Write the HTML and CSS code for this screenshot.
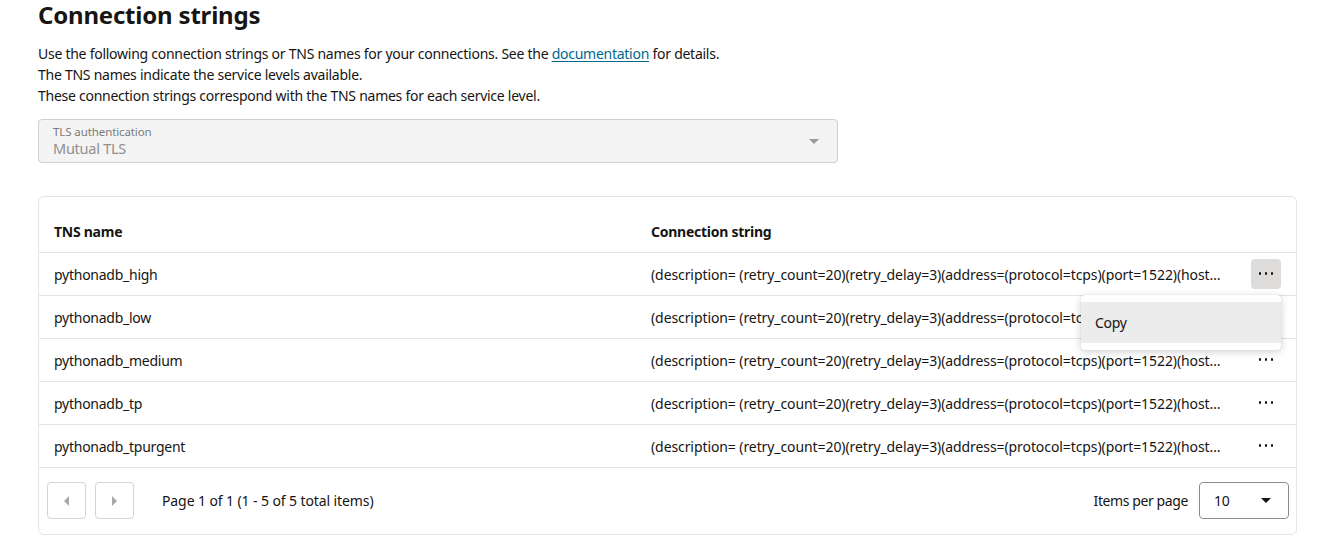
FILE: index.html
```html
<!DOCTYPE html>
<html lang="en">
<head>
<meta charset="utf-8">
<title>Connection strings</title>
<link rel="stylesheet" href="styles.css">
</head>
<body>
<main class="page">
  <h1 class="title">Connection strings</h1>
  <div class="intro">
    <p>Use the following connection strings or TNS names for your connections. See the <a href="#" class="link">documentation</a> for details.</p>
    <p>The TNS names indicate the service levels available.</p>
    <p>These connection strings correspond with the TNS names for each service level.</p>
  </div>

  <div class="select disabled">
    <div class="select-text">
      <span class="select-label">TLS authentication</span>
      <span class="select-value">Mutual TLS</span>
    </div>
    <span class="caret caret-light"></span>
  </div>

  <section class="card">
    <table class="grid">
      <colgroup>
        <col class="c-name">
        <col class="c-conn">
        <col class="c-act">
      </colgroup>
      <thead>
        <tr>
          <th>TNS name</th>
          <th>Connection string</th>
          <th></th>
        </tr>
      </thead>
      <tbody>
        <tr>
          <td>pythonadb_high</td>
          <td class="conn" title="(description= (retry_count=20)(retry_delay=3)(address=(protocol=tcps)(port=1522)(host=adb.us-ashburn-1.oraclecloud.com))(connect_data=(service_name=pythonadb_high.adb.oraclecloud.com))(security=(ssl_server_dn_match=yes)))">(description= (retry_count=20)(retry_delay=3)(address=(protocol=tcps)(port=1522)(host…</td>
          <td class="act">
            <div class="act-wrap">
              <button class="dots active" aria-label="Actions"><span></span><span></span><span></span></button>
              <div class="menu">
                <div class="menu-item">Copy</div>
              </div>
            </div>
          </td>
        </tr>
        <tr>
          <td>pythonadb_low</td>
          <td class="conn" title="(description= (retry_count=20)(retry_delay=3)(address=(protocol=tcps)(port=1522)(host=adb.us-ashburn-1.oraclecloud.com))(connect_data=(service_name=pythonadb_low.adb.oraclecloud.com))(security=(ssl_server_dn_match=yes)))">(description= (retry_count=20)(retry_delay=3)(address=(protocol=tcps)(port=1522)(host…</td>
          <td class="act"><button class="dots" aria-label="Actions"><span></span><span></span><span></span></button></td>
        </tr>
        <tr>
          <td>pythonadb_medium</td>
          <td class="conn" title="(description= (retry_count=20)(retry_delay=3)(address=(protocol=tcps)(port=1522)(host=adb.us-ashburn-1.oraclecloud.com))(connect_data=(service_name=pythonadb_medium.adb.oraclecloud.com))(security=(ssl_server_dn_match=yes)))">(description= (retry_count=20)(retry_delay=3)(address=(protocol=tcps)(port=1522)(host…</td>
          <td class="act"><button class="dots" aria-label="Actions"><span></span><span></span><span></span></button></td>
        </tr>
        <tr>
          <td>pythonadb_tp</td>
          <td class="conn" title="(description= (retry_count=20)(retry_delay=3)(address=(protocol=tcps)(port=1522)(host=adb.us-ashburn-1.oraclecloud.com))(connect_data=(service_name=pythonadb_tp.adb.oraclecloud.com))(security=(ssl_server_dn_match=yes)))">(description= (retry_count=20)(retry_delay=3)(address=(protocol=tcps)(port=1522)(host…</td>
          <td class="act"><button class="dots" aria-label="Actions"><span></span><span></span><span></span></button></td>
        </tr>
        <tr>
          <td>pythonadb_tpurgent</td>
          <td class="conn" title="(description= (retry_count=20)(retry_delay=3)(address=(protocol=tcps)(port=1522)(host=adb.us-ashburn-1.oraclecloud.com))(connect_data=(service_name=pythonadb_tpurgent.adb.oraclecloud.com))(security=(ssl_server_dn_match=yes)))">(description= (retry_count=20)(retry_delay=3)(address=(protocol=tcps)(port=1522)(host…</td>
          <td class="act"><button class="dots" aria-label="Actions"><span></span><span></span><span></span></button></td>
        </tr>
      </tbody>
    </table>
    <footer class="pager">
      <div class="pager-left">
        <button class="pbtn" aria-label="Previous page"><span class="tri tri-left"></span></button>
        <button class="pbtn" aria-label="Next page"><span class="tri tri-right"></span></button>
        <span class="pager-info">Page 1 of 1 (1 - 5 of 5 total items)</span>
      </div>
      <div class="pager-right">
        <span class="ipp-label">Items per page</span>
        <div class="ipp">
          <span>10</span>
          <span class="caret caret-dark"></span>
        </div>
      </div>
    </footer>
  </section>
</main>
</body>
</html>
```

FILE: styles.css
```css
* { box-sizing: border-box; }

html, body {
  margin: 0;
  padding: 0;
  background: #ffffff;
}

body {
  font-family: "Noto Sans", "Liberation Sans", sans-serif;
  font-size: 14px;
  letter-spacing: -0.26px;
  color: #161513;
}

.page {
  padding: 0 29px 0 38px;
}

.title {
  margin: 0;
  padding-top: 0;
  font-size: 24px;
  line-height: 30px;
  font-weight: 700;
  letter-spacing: -0.2px;
}

.intro {
  margin-top: 13px;
}

.intro p {
  margin: 0;
  line-height: 21px;
}

.link {
  color: #00688c;
  text-decoration: underline;
  text-underline-offset: 2px;
}

.select {
  margin-top: 13px;
  width: 800px;
  height: 44px;
  border: 1px solid #cfcfcf;
  border-radius: 4px;
  background: #f4f4f4;
  display: flex;
  align-items: center;
  justify-content: space-between;
  padding: 0 18px 0 14px;
}

.select-text {
  display: flex;
  flex-direction: column;
}

.select-label {
  font-size: 11.5px;
  line-height: 14px;
  letter-spacing: -0.1px;
  color: #7b7b7b;
}

.select-value {
  font-size: 14.5px;
  line-height: 18px;
  color: #8f8f8f;
}

.caret {
  width: 0;
  height: 0;
  border-left: 5px solid transparent;
  border-right: 5px solid transparent;
}

.caret-light {
  border-top: 5px solid #9a9a9a;
}

.caret-dark {
  border-top: 5px solid #161513;
}

.card {
  margin-top: 33px;
  border: 1px solid #e4e4e4;
  border-radius: 6px;
  background: #fff;
}

.grid {
  width: 100%;
  border-collapse: collapse;
  table-layout: fixed;
}

.c-name { width: 597px; }
.c-act { width: 60px; }

.grid th {
  height: 55px;
  text-align: left;
  vertical-align: bottom;
  font-weight: 700;
  padding: 0 15px 10px;
  line-height: 20px;
  border-bottom: 1px solid #e4e4e4;
}

.grid td {
  height: 43px;
  padding: 2px 15px 0;
  line-height: 20px;
  border-bottom: 1px solid #e4e4e4;
  white-space: nowrap;
  overflow: hidden;
  text-overflow: ellipsis;
}

.grid td.conn {
  letter-spacing: -0.09px;
}

.grid td.act {
  padding: 0;
  overflow: visible;
  text-align: center;
}

.act-wrap {
  position: relative;
  display: inline-block;
  vertical-align: middle;
}

.dots {
  width: 30px;
  height: 30px;
  border: none;
  border-radius: 4px;
  background: transparent;
  display: inline-flex;
  align-items: center;
  justify-content: center;
  gap: 3.5px;
  padding: 0;
  vertical-align: middle;
  cursor: pointer;
}

.dots span {
  width: 2.5px;
  height: 2.5px;
  border-radius: 50%;
  background: #161513;
}

.dots.active {
  background: #dddcdb;
}

.menu {
  position: absolute;
  top: 36px;
  right: 0;
  width: 200px;
  background: #fff;
  border-radius: 4px;
  box-shadow: 0 2px 8px rgba(0, 0, 0, 0.18), 0 0 1px rgba(0, 0, 0, 0.2);
  padding: 7px 0;
  text-align: left;
  z-index: 10;
}

.menu-item {
  height: 41px;
  line-height: 41px;
  padding: 0 14px;
  background: #ececec;
  font-size: 14px;
}

.pager {
  height: 66px;
  display: flex;
  align-items: center;
  justify-content: space-between;
  padding: 0 7px 0 8px;
}

.pager-left {
  display: flex;
  align-items: center;
}

.pbtn {
  width: 39px;
  height: 37px;
  border: 1px solid #d4d4d4;
  border-radius: 4px;
  background: #fff;
  margin-right: 9px;
  display: flex;
  align-items: center;
  justify-content: center;
  padding: 0;
}

.tri {
  width: 0;
  height: 0;
  border-top: 5px solid transparent;
  border-bottom: 5px solid transparent;
}

.tri-left { border-right: 5px solid #a8a8a8; }
.tri-right { border-left: 5px solid #a8a8a8; }

.pager-info {
  margin-left: 19px;
  letter-spacing: -0.1px;
}

.pager-right {
  display: flex;
  align-items: center;
}

.ipp-label {
  margin-right: 11px;
  letter-spacing: -0.4px;
}

.ipp {
  width: 90px;
  height: 37px;
  border: 1px solid #8d8d8d;
  border-radius: 4px;
  display: flex;
  align-items: center;
  justify-content: space-between;
  padding: 0 17px 0 14px;
}
```
